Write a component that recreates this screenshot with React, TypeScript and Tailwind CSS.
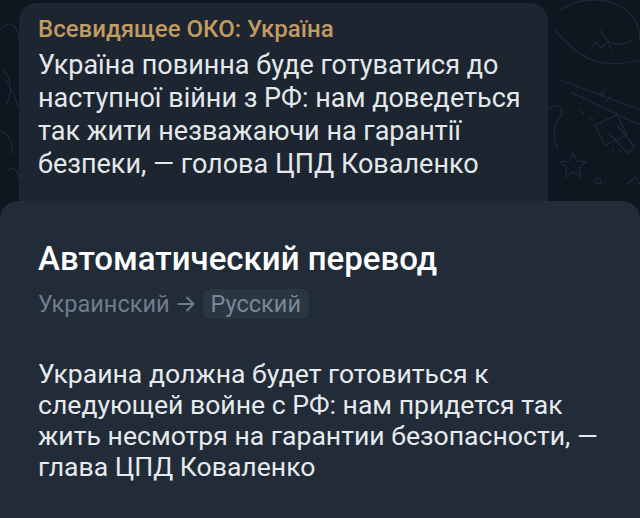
import React from "react";

const Doodles = () => (
  <svg className="absolute inset-0 h-full w-full" viewBox="0 0 640 518" fill="none" stroke="#1f2a36" strokeWidth="1.2">
    {/* right side: balloon */}
    <path d="M560 10 C590 -10 640 0 640 40" />
    <path d="M555 30 C580 60 600 70 640 60" />
    <path d="M600 30 C610 50 625 45 632 40" />
    <path d="M590 50 l6 -8 l5 6 l7 -6 l4 8" />
    <path d="M560 80 L640 110" />
    <path d="M570 92 L640 125" />
    <path d="M600 95 l6 -6 M605 103 l6 -8" />
    <circle cx="602" cy="94" r="2" />
    {/* flashlight */}
    <path d="M595 125 l22 -10 l10 20 l-22 10 z" />
    <path d="M617 125 l18 22 l-8 6 l-18 -20" />
    <path d="M612 148 l2 4 M620 150 l2 4" />
    <path d="M580 110 l4 4 M588 118 l6 2" />
    {/* star */}
    <path d="M573 153 l4 8 l9 1 l-7 6 l2 9 l-8 -5 l-8 5 l2 -9 l-7 -6 l9 -1 z" />
    <circle cx="598" cy="181" r="3" />
    <path d="M626 185 l10 -8 l4 8" />
    <path d="M548 110 c10 -10 20 0 10 10 c-5 5 -5 20 0 30" />
    {/* left side */}
    <path d="M0 30 C10 20 18 25 19 40" />
    <path d="M2 70 c8 5 12 20 4 35" />
    <path d="M6 80 c6 10 10 18 12 28" />
    <path d="M0 130 c10 5 15 15 10 25" />
    <path d="M8 170 c6 -4 10 0 11 10" />
  </svg>
);

export default function App() {
  return (
    <div
      className="relative flex h-[518px] w-[640px] flex-col overflow-hidden bg-[#0e1620]"
      style={{ fontFamily: "Roboto, 'Noto Sans', sans-serif" }}
    >
      <Doodles />

      {/* message bubble */}
      <div className="relative ml-[19px] mt-[3px] h-[198px] w-[529px] shrink-0 rounded-t-[18px] bg-[#1c2530] px-[19px] pt-[12px]">
        <div className="text-[24px] font-medium leading-[28px] text-[#c39a62]">
          Всевидящее ОКО: Україна
        </div>
        <p className="mt-[6px] text-[27px] leading-[33px] text-[#e4e8eb]">
          Україна повинна буде готуватися до наступної війни з РФ: нам доведеться так жити незважаючи на гарантії
          безпеки, — голова ЦПД Коваленко
        </p>
      </div>

      {/* translation sheet */}
      <div className="relative flex-1 rounded-t-[18px] bg-[#212c38] pl-[38px] pt-[39px]">
        <h2 className="text-[33px] font-medium leading-[38px] text-white">Автоматический перевод</h2>
        <div className="mt-[11px] flex h-[30px] items-center text-[23.5px] leading-[30px] text-[#6f7d8b]">
          <span>Украинский</span>
          <svg className="ml-[6px] mr-[7px]" width="20" height="20" viewBox="0 0 20 20" fill="none" stroke="#6f7d8b" strokeWidth="1.8" strokeLinecap="round" strokeLinejoin="round">
            <path d="M2.5 10h15M11 3.5l6.5 6.5-6.5 6.5" />
          </svg>
          <span className="rounded-md bg-[#2a3642] px-[8px] text-[#7a8896]">Русский</span>
        </div>
        <p className="mt-[39px] w-[568px] text-[26.6px] leading-[31px] text-[#e6eaed]">
          Украина должна будет готовиться к следующей войне с РФ: нам придется так жить несмотря на гарантии
          безопасности, — глава ЦПД Коваленко
        </p>
      </div>
    </div>
  );
}
